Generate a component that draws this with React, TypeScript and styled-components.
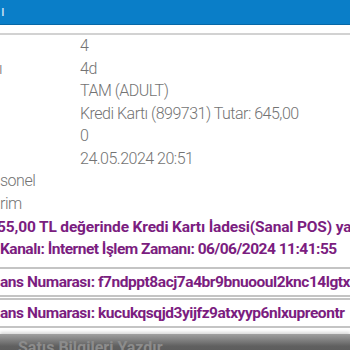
import React from "react";
import styled, { createGlobalStyle } from "styled-components";

const Global = createGlobalStyle`
  html, body { margin: 0; padding: 0; background: #fff; overflow: hidden; }
  body { font-family: Roboto, "Noto Sans", sans-serif; width: 350px; height: 350px; }
`;

const Page = styled.div`
  width: 350px;
  height: 350px;
  overflow: hidden;
  display: flex;
  flex-direction: column;
  & > * { flex-shrink: 0; }
`;

const Header = styled.div`
  height: 24px;
  background: #0a7ec8;
  border-bottom: 1px solid #0767a6;
  color: #fff;
  font-size: 15px;
  line-height: 22px;
  white-space: nowrap;
  overflow: hidden;
`;

const HeaderText = styled.span`
  display: inline-block;
  margin-left: 1px;
  opacity: 0.8;
`;

const Divider = styled.div`
  margin-top: 8px;
  height: 2px;
  background: #d2d2d2;
`;

const InfoTable = styled.div`
  display: grid;
  grid-template-columns: 80px 1fr;
  grid-auto-rows: 22.5px;
  color: #737373;
  font-size: 16px;
  font-weight: 300;
  letter-spacing: -0.5px;
  line-height: 22.5px;
  white-space: nowrap;
`;

const Label = styled.div<{ $shift?: number }>`
  margin-left: ${(p) => p.$shift ?? 0}px;
`;

const Value = styled.div``;

const Notice = styled.div`
  margin-top: 1px;
  color: #7b1d80;
  font-weight: 700;
  font-size: 15.5px;
  letter-spacing: -0.5px;
  line-height: 22px;
  white-space: nowrap;
`;

const NoticeLine = styled.div<{ $shift?: number; $spacing?: number }>`
  margin-left: ${(p) => p.$shift ?? 0}px;
  ${(p) => (p.$spacing !== undefined ? `letter-spacing: ${p.$spacing}px;` : "")}
`;

const RefBox = styled.div<{ $gap?: number }>`
  margin-top: ${(p) => p.$gap ?? 0}px;
  border-top: 2px solid #c4c4c4;
  border-bottom: 2px solid #c4c4c4;
  height: 26px;
  line-height: 26px;
  color: #7b1d80;
  font-weight: 700;
  font-size: 15.5px;
  letter-spacing: -0.45px;
  white-space: nowrap;
  overflow: hidden;
`;

const BottomBar = styled.div`
  margin-top: 6px;
  flex: 1;
  background: linear-gradient(#a0a0a0, #606060 45%, #555);
  color: #8c8c8c;
  font-size: 16px;
  font-weight: 700;
  line-height: 27px;
  padding-left: 18px;
  white-space: nowrap;
  box-shadow: 0 -2px 3px rgba(0, 0, 0, 0.15);
`;

const rows: [string, string, number?][] = [
  ["", "4"],
  ["ı", "4d", -1],
  ["", "TAM (ADULT)"],
  ["", "Kredi Kartı (899731) Tutar: 645,00"],
  ["", "0"],
  ["", "24.05.2024 20:51"],
  ["sonel", ""],
  ["rim", ""],
];

export default function App() {
  return (
    <Page>
      <Global />
      <Header>
        <HeaderText>ı</HeaderText>
      </Header>
      <Divider />
      <InfoTable>
        {rows.map(([l, v, s], i) => (
          <React.Fragment key={i}>
            <Label $shift={s}>{l}</Label>
            <Value>{v}</Value>
          </React.Fragment>
        ))}
      </InfoTable>
      <Notice>
        <NoticeLine $shift={-3} $spacing={-0.15}>
          55,00 TL değerinde Kredi Kartı İadesi(Sanal POS) yapıldı.
        </NoticeLine>
        <NoticeLine>Kanalı: İnternet İşlem Zamanı: 06/06/2024 11:41:55</NoticeLine>
      </Notice>
      <RefBox $gap={7}>ans Numarası: f7ndppt8acj7a4br9bnuooul2knc14lgtx</RefBox>
      <RefBox $gap={1}>ans Numarası: kucukqsqjd3yijfz9atxyyp6nlxupreontr</RefBox>
      <BottomBar>Satış Bilgileri Yazdır</BottomBar>
    </Page>
  );
}
